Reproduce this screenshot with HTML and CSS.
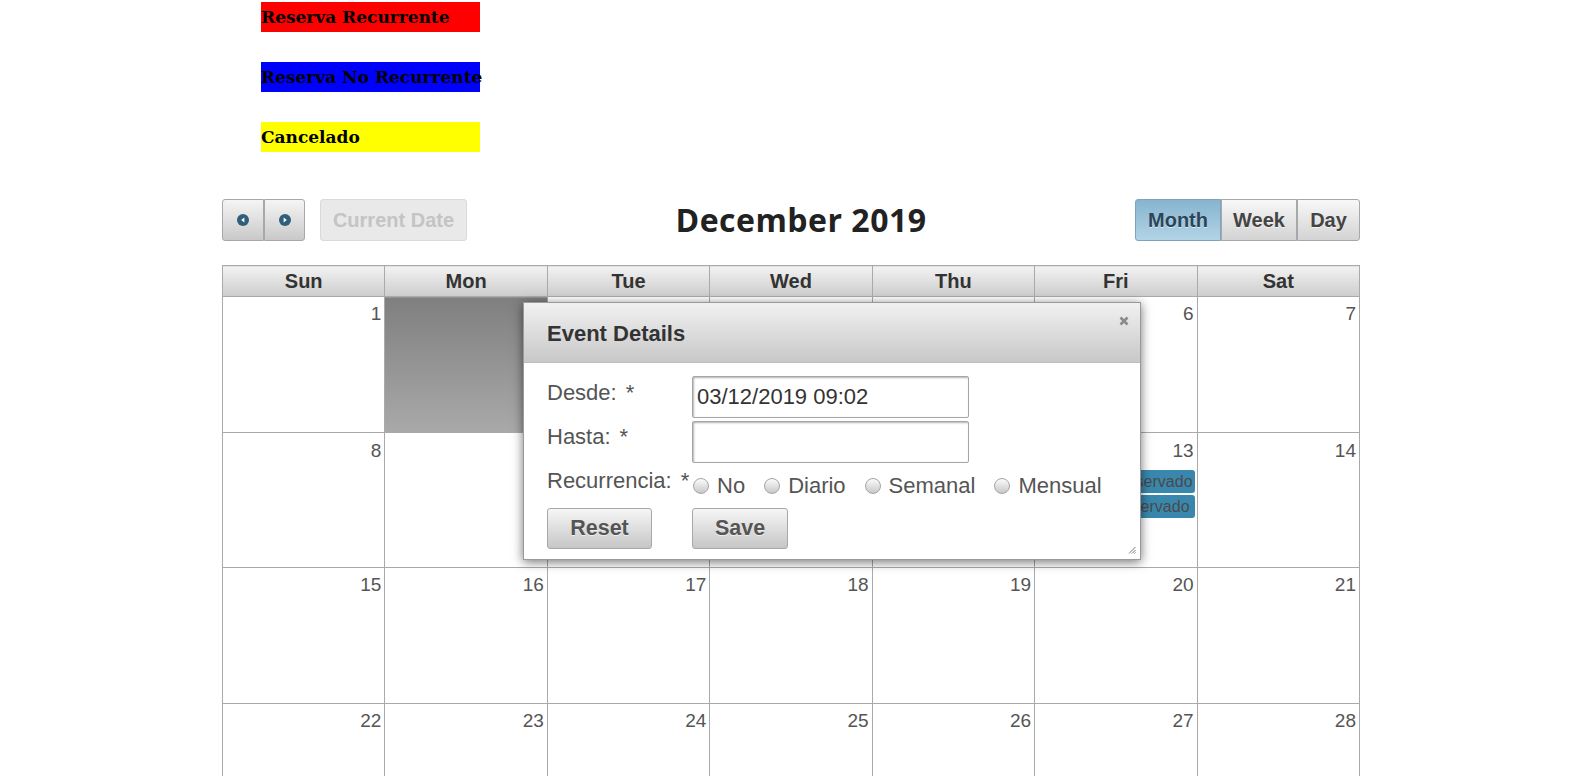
FILE: index.html
```html
<!DOCTYPE html>
<html>
<head>
<meta charset="utf-8">
<link rel="stylesheet" href="styles.css">
</head>
<body>
<div class="legend">
  <div class="legend-item red">Reserva Recurrente</div>
  <div class="legend-item blue">Reserva No Recurrente</div>
  <div class="legend-item yellow">Cancelado</div>
</div>

<div class="cal">
  <div class="toolbar">
    <div class="tb-left">
      <div class="btn-group">
        <button class="btn nav"><svg width="12" height="12" viewBox="0 0 12 12"><circle cx="6" cy="6" r="6" fill="#2f5d7c"/><path d="M7.4 3.4 L4.2 6 L7.4 8.6 Z" fill="#fff"/></svg></button>
        <button class="btn nav"><svg width="12" height="12" viewBox="0 0 12 12"><circle cx="6" cy="6" r="6" fill="#2f5d7c"/><path d="M4.6 3.4 L7.8 6 L4.6 8.6 Z" fill="#fff"/></svg></button>
      </div>
      <button class="btn disabled">Current Date</button>
    </div>
    <h2 class="title">December 2019</h2>
    <div class="btn-group">
      <button class="btn view active">Month</button>
      <button class="btn view">Week</button>
      <button class="btn view">Day</button>
    </div>
  </div>

  <table class="grid">
    <thead>
      <tr><th>Sun</th><th>Mon</th><th>Tue</th><th>Wed</th><th>Thu</th><th>Fri</th><th>Sat</th></tr>
    </thead>
    <tbody>
      <tr>
        <td><div class="num">1</div></td>
        <td class="selected"><div class="num">2</div></td>
        <td><div class="num">3</div></td>
        <td><div class="num">4</div></td>
        <td><div class="num">5</div></td>
        <td><div class="num">6</div></td>
        <td><div class="num">7</div></td>
      </tr>
      <tr>
        <td><div class="num">8</div></td>
        <td><div class="num">9</div></td>
        <td><div class="num">10</div></td>
        <td><div class="num">11</div></td>
        <td><div class="num">12</div></td>
        <td><div class="num">13</div><div class="chip">Reservado</div><div class="chip second">Reservado</div></td>
        <td><div class="num">14</div></td>
      </tr>
      <tr>
        <td><div class="num">15</div></td>
        <td><div class="num">16</div></td>
        <td><div class="num">17</div></td>
        <td><div class="num">18</div></td>
        <td><div class="num">19</div></td>
        <td><div class="num">20</div></td>
        <td><div class="num">21</div></td>
      </tr>
      <tr>
        <td><div class="num">22</div></td>
        <td><div class="num">23</div></td>
        <td><div class="num">24</div></td>
        <td><div class="num">25</div></td>
        <td><div class="num">26</div></td>
        <td><div class="num">27</div></td>
        <td><div class="num">28</div></td>
      </tr>
    </tbody>
  </table>
</div>

<div class="dialog">
  <div class="dlg-head">
    <span class="dlg-title">Event Details</span>
    <svg class="dlg-close" width="10" height="10" viewBox="0 0 10 10"><path d="M1.5 1.5 L8.5 8.5 M8.5 1.5 L1.5 8.5" stroke="#8a8a8a" stroke-width="2.6"/></svg>
  </div>
  <div class="dlg-body">
    <div class="row r1">
      <div class="lbl">Desde:<span class="req">*</span></div>
      <input class="field" type="text" value="03/12/2019 09:02">
    </div>
    <div class="row r2">
      <div class="lbl">Hasta:<span class="req">*</span></div>
      <input class="field" type="text" value="">
    </div>
    <div class="row r3">
      <div class="lbl">Recurrencia:<span class="req">*</span></div>
      <div class="radios">
        <span class="opt"><span class="radio"></span>No</span>
        <span class="opt"><span class="radio"></span>Diario</span>
        <span class="opt"><span class="radio"></span>Semanal</span>
        <span class="opt"><span class="radio"></span>Mensual</span>
      </div>
    </div>
    <div class="row r4">
      <div class="lbl"><button class="btn dbtn reset">Reset</button></div>
      <button class="btn dbtn save">Save</button>
    </div>
  </div>
  <svg class="grip" width="8" height="8" viewBox="0 0 8 8"><path d="M7.5 1 L1 7.5 M7.5 4 L4 7.5 M7.5 6.5 L6.5 7.5" stroke="#777" stroke-width="1"/></svg>
</div>
</body>
</html>
```

FILE: styles.css
```css
* { box-sizing: border-box; }

body {
  margin: 0;
  font-family: "Liberation Sans", Arial, sans-serif;
  background: #fff;
  color: #555;
}

.legend {
  padding: 2px 0 0 261px;
  display: flex;
  flex-direction: column;
  gap: 30px;
}

.legend-item {
  width: 219px;
  height: 30px;
  line-height: 31px;
  font-family: "DejaVu Serif", "Liberation Serif", serif;
  font-weight: bold;
  font-size: 17px;
  color: #000;
  white-space: nowrap;
}
.legend-item.red { background: #ff0000; }
.legend-item.blue { background: #0000ff; }
.legend-item.yellow { background: #ffff00; }

.cal {
  width: 1138px;
  margin: 47px 0 0 222px;
}

.toolbar {
  display: flex;
  justify-content: space-between;
  align-items: center;
  height: 42px;
}

.tb-left {
  display: flex;
  gap: 15px;
}

.btn-group {
  display: flex;
}

.btn {
  height: 42px;
  margin: 0;
  font-family: "Liberation Sans", Arial, sans-serif;
  font-weight: bold;
  font-size: 20px;
  color: #444;
  border: 1px solid #a8a8a8;
  background: linear-gradient(#f5f5f5, #c9c9c9);
  border-radius: 3px;
  padding: 0;
  text-shadow: 0 1px 0 rgba(255,255,255,.6);
  cursor: pointer;
}

.btn-group .btn { border-radius: 0; }
.btn-group .btn:first-child { border-radius: 3px 0 0 3px; }
.btn-group .btn:last-child { border-radius: 0 3px 3px 0; }
.btn-group .btn + .btn { border-left: none; }

.btn.nav {
  width: 42px;
  display: flex;
  align-items: center;
  justify-content: center;
}
.btn-group .btn.nav + .btn.nav { border-left: 1px solid #a8a8a8; width: 41px; }

.btn.disabled {
  width: 147px;
  background: #e9e9e9;
  border-color: #dadada;
  color: #c4c4c4;
  text-shadow: none;
}

.btn.view {
  background: linear-gradient(#f8f8f8, #d3d3d3);
  color: #444;
}
.btn.view.active {
  background: linear-gradient(#86b4cf, #b3d4e6);
  border-color: #7ea3bb;
  color: #2b465a;
  width: 86px;
}
.btn.view:nth-child(2) { width: 76px; border-left: 1px solid #a8a8a8; }
.btn.view:nth-child(3) { width: 63px; border-left: 1px solid #a8a8a8; }

.title {
  margin: 0;
  font-family: "Open Sans", sans-serif;
  font-weight: bold;
  font-size: 32px;
  letter-spacing: 0.5px;
  color: #222;
  line-height: 40px;
}

.grid {
  margin-top: 24px;
  width: 1138px;
  border-collapse: collapse;
  table-layout: fixed;
}

.grid th {
  height: 31px;
  padding: 0;
  border: 1px solid #aaa;
  background: linear-gradient(#f2f2f2, #cdcdcd);
  color: #333;
  font-weight: bold;
  font-size: 20px;
  text-align: center;
  line-height: 28px;
}

.grid td {
  height: 135.5px;
  padding: 0;
  border: 1px solid #aaa;
  vertical-align: top;
}

.grid td.selected {
  background: linear-gradient(#7f7f7f, #a9a9a9);
}

.num {
  text-align: right;
  font-size: 19px;
  line-height: 22px;
  padding: 6px 3px 0 0;
  color: #555;
}

.grid tbody tr:nth-child(2) .num { padding-top: 7px; }

.chip {
  margin: 8px 2px 0 1px;
  height: 23px;
  background: #3a87ad;
  border-radius: 3px;
  font-size: 16px;
  line-height: 23px;
  color: #4a4a4a;
  text-align: right;
  padding-right: 2px;
  overflow: hidden;
}
.chip.second {
  margin-top: 2px;
  padding-right: 5px;
}

.dialog {
  position: absolute;
  left: 523px;
  top: 302px;
  width: 618px;
  height: 258px;
  background: #fff;
  border: 1px solid #9a9a9a;
  box-shadow: 0 2px 10px rgba(0,0,0,.55);
}

.dlg-head {
  position: relative;
  height: 60px;
  background: linear-gradient(#f1f1f1, #c8c8c8);
  border-bottom: 1px solid #bdbdbd;
  padding-left: 23px;
  display: flex;
  align-items: center;
}

.dlg-title {
  font-weight: bold;
  font-size: 22px;
  color: #333;
  padding-top: 3px;
}

.dlg-close {
  position: absolute;
  right: 11px;
  top: 13px;
}

.dlg-body {
  padding: 13px 0 0 23px;
}

.row {
  display: flex;
  align-items: flex-start;
}

.lbl {
  width: 145px;
  flex: none;
  font-size: 22px;
  line-height: 26px;
  color: #555;
  white-space: nowrap;
}

.req { margin-left: 9px; }

.r1 .lbl { padding-top: 4px; }
.r2 { margin-top: 3px; }
.r2 .lbl { padding-top: 3px; }
.r3 { height: 45px; }
.r3 .lbl { padding-top: 5px; }

.field {
  width: 277px;
  height: 42px;
  margin: 0;
  border: 1px solid #a6a6a6;
  border-radius: 2px;
  box-shadow: inset 1px 1px 2px rgba(0,0,0,.3);
  font-family: "Liberation Sans", Arial, sans-serif;
  font-size: 22px;
  color: #333;
  padding: 0 4px;
  outline: none;
}

.radios {
  display: flex;
  padding-top: 10px;
  margin-left: 1px;
  font-size: 22px;
  line-height: 26px;
  color: #555;
}

.opt {
  display: flex;
  align-items: center;
  margin-right: 19px;
}

.radio {
  width: 16px;
  height: 16px;
  border-radius: 50%;
  border: 1px solid #a5a5a5;
  background: linear-gradient(#fbfbfb, #c8c8c8);
  margin-right: 8px;
  flex: none;
}

.dbtn {
  height: 41px;
  font-size: 21.5px;
  background: linear-gradient(#f6f6f6, #c6c6c6);
  color: #555;
  border-color: #a8a8a8;
}
.dbtn.reset { width: 105px; }
.dbtn.save { width: 96px; }

.grip {
  position: absolute;
  right: 4px;
  bottom: 5px;
}
```
